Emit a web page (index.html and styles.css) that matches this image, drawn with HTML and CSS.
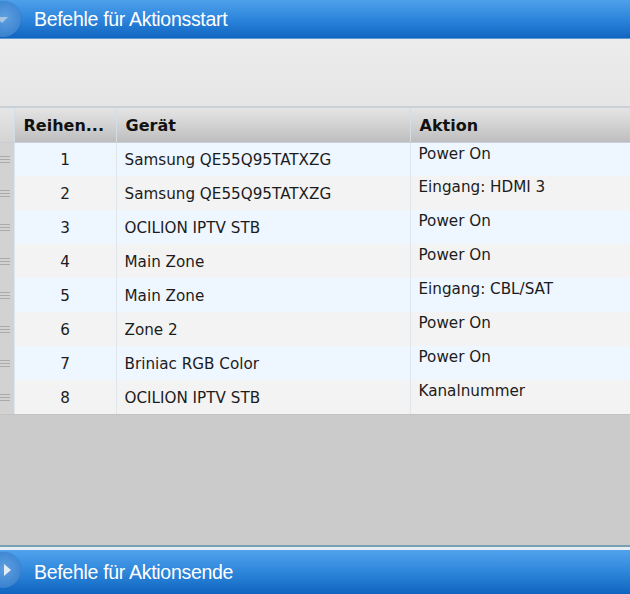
FILE: index.html
```html
<!DOCTYPE html>
<html lang="de">
<head>
    <meta charset="UTF-8">
    <title>Befehle</title>
    <link rel="stylesheet" href="styles.css">
</head>
<body>

<div class="panel">
    <div class="bar">
        <span class="toggle open"></span>
        <span class="bar-title">Befehle für Aktionsstart</span>
    </div>
    <div class="toolbar"></div>

    <table class="grid">
        <thead>
            <tr>
                <th class="handle"></th>
                <th class="num">Reihen...</th>
                <th class="device">Gerät</th>
                <th class="action">Aktion</th>
            </tr>
        </thead>
        <tbody>
            <tr><td class="handle"><i class="grip"></i></td><td class="num">1</td><td class="device">Samsung QE55Q95TATXZG</td><td class="action">Power On</td></tr>
            <tr><td class="handle"><i class="grip"></i></td><td class="num">2</td><td class="device">Samsung QE55Q95TATXZG</td><td class="action">Eingang: HDMI 3</td></tr>
            <tr><td class="handle"><i class="grip"></i></td><td class="num">3</td><td class="device">OCILION IPTV STB</td><td class="action">Power On</td></tr>
            <tr><td class="handle"><i class="grip"></i></td><td class="num">4</td><td class="device">Main Zone</td><td class="action">Power On</td></tr>
            <tr><td class="handle"><i class="grip"></i></td><td class="num">5</td><td class="device">Main Zone</td><td class="action">Eingang: CBL/SAT</td></tr>
            <tr><td class="handle"><i class="grip"></i></td><td class="num">6</td><td class="device">Zone 2</td><td class="action">Power On</td></tr>
            <tr><td class="handle"><i class="grip"></i></td><td class="num">7</td><td class="device">Briniac RGB Color</td><td class="action">Power On</td></tr>
            <tr><td class="handle"><i class="grip"></i></td><td class="num">8</td><td class="device">OCILION IPTV STB</td><td class="action">Kanalnummer</td></tr>
        </tbody>
    </table>

    <div class="empty"></div>

    <div class="bar bar-end">
        <span class="toggle closed"></span>
        <span class="bar-title">Befehle für Aktionsende</span>
    </div>
</div>

</body>
</html>
```

FILE: styles.css
```css
* {
    margin: 0;
    padding: 0;
    box-sizing: border-box;
}

body {
    width: 630px;
    height: 594px;
    overflow: hidden;
    background-color: #cbcbcb;
    font-family: 'DejaVu Sans', Verdana, sans-serif;
}

.panel {
    display: flex;
    flex-direction: column;
    height: 594px;
}

.bar {
    height: 39px;
    display: flex;
    align-items: center;
    background: linear-gradient(#4ea0ea, #2a82da 55%, #1165c0);
    border-bottom: 1px solid #5c9ad6;
    position: relative;
    flex-shrink: 0;
}

.bar-title {
    margin-left: 34px;
    color: #fff;
    font-family: 'Liberation Sans', Arial, sans-serif;
    font-size: 19.5px;
    letter-spacing: -0.3px;
    padding-top: 1px;
}

.toggle {
    position: absolute;
    left: -15px;
    top: 1px;
    width: 36px;
    height: 36px;
    border-radius: 50%;
    background: radial-gradient(circle at 55% 45%, #5e9fe0, #3a82cf 70%, #2d73c0);
    box-shadow: 0 0 1px rgba(0, 40, 100, 0.4);
}

.toggle::after {
    content: '';
    position: absolute;
    width: 0;
    height: 0;
}

.toggle.open::after {
    left: 11px;
    top: 16px;
    border-left: 6px solid transparent;
    border-right: 6px solid transparent;
    border-top: 6px solid #a9c5e4;
}

.toggle.closed::after {
    left: 19px;
    top: 12px;
    border-top: 6px solid transparent;
    border-bottom: 6px solid transparent;
    border-left: 7px solid #e4ecf5;
}

.toolbar {
    height: 69px;
    background: linear-gradient(#ececec, #e6e6e6);
    border-bottom: 2px solid #c9d0d6;
    flex-shrink: 0;
}

.grid {
    width: 630px;
    border-collapse: collapse;
    table-layout: fixed;
    font-size: 15.2px;
    color: #1c1c1c;
    flex-shrink: 0;
}

.grid th {
    height: 34px;
    background: linear-gradient(#e4e4e4, #d2d2d2 50%, #bdbdbd);
    text-align: left;
    font-weight: bold;
    font-size: 16px;
    padding: 2px 9px 0;
    border-left: 1px solid #d3dde6;
    border-bottom: 1px solid #c8cfd6;
    color: #111;
    white-space: nowrap;
}

.grid th.handle {
    width: 14px;
    padding: 0;
    border-left: none;
    background: linear-gradient(#e6e6e6, #d4d4d4);
}

.grid th.num {
    width: 102px;
    padding: 2px 4px 0 9px;
}

.grid th.device {
    width: 294px;
}

.grid td {
    height: 34px;
    padding: 2px 8px 0;
    border-left: 1px solid #dfe6ec;
    white-space: nowrap;
}

.grid tbody tr:nth-child(odd) td {
    background-color: #eef6ff;
}

.grid tbody tr:nth-child(even) td {
    background-color: #f3f3f3;
}

.grid td.handle,
.grid tbody tr td.handle {
    background-color: #d2d2d2;
    border-left: none;
    padding: 0;
}

.grid td.num {
    text-align: center;
}

.grid td.action {
    vertical-align: top;
    padding-top: 2px;
}

.grip {
    display: block;
    width: 10px;
    height: 7px;
    border-top: 1px solid #aaaaaa;
    border-bottom: 1px solid #aaaaaa;
    position: relative;
    margin-top: 1px;
}

.grip::after {
    content: '';
    position: absolute;
    left: 0;
    right: 0;
    top: 2px;
    border-top: 1px solid #aaaaaa;
}

.grid tbody tr:last-child td {
    border-bottom: 1px solid #c3c3c3;
}

.empty {
    flex: 1;
    background-color: #cbcbcb;
    border-bottom: 2px solid #7aa0b6;
}

.bar-end {
    height: 47px;
    border-top: 3px solid #e6eef4;
    border-bottom: none;
    background: linear-gradient(#50a2ec, #2b83d8 55%, #1064bf);
}

.bar-end .toggle {
    top: 2px;
}
```
